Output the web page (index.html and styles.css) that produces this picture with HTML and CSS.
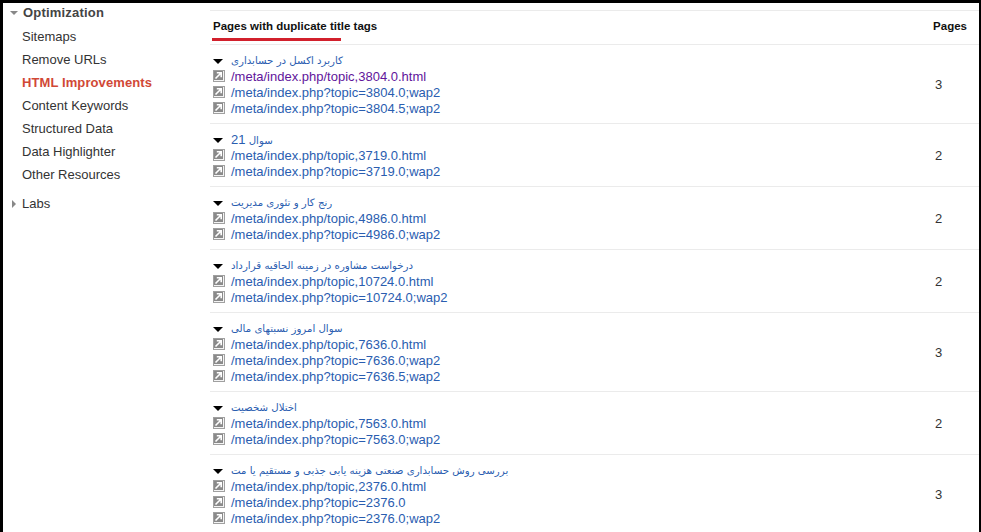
FILE: index.html
```html
<!DOCTYPE html>
<html lang="en">
<head>
    <meta charset="UTF-8">
    <title>HTML Improvements</title>
    <link rel="stylesheet" href="styles.css">
</head>
<body>
    <svg class="defs" width="0" height="0">
        <symbol id="ext" viewBox="0 0 12 12">
            <rect width="12" height="12" fill="#a0a0a0"/>
            <rect x="1" y="1" width="10" height="10" fill="#f4f4f4"/>
            <rect x="1" y="1" width="9" height="9" fill="#8a8a8a"/>
            <path d="M2.5 8.5 L7.5 3.5 M3.8 2.8 H8.2 V7.2" fill="none" stroke="#fff" stroke-width="1.6"/>
        </symbol>
    </svg>
    <div class="page">
        <nav class="sidebar">
            <div class="nav-head"><span class="arrow-down"></span>Optimization</div>
            <ul class="nav-list">
                <li>Sitemaps</li>
                <li>Remove URLs</li>
                <li class="active">HTML Improvements</li>
                <li>Content Keywords</li>
                <li>Structured Data</li>
                <li>Data Highlighter</li>
                <li>Other Resources</li>
            </ul>
            <div class="nav-labs"><span class="arrow-right"></span>Labs</div>
        </nav>
        <main class="content">
            <div class="table-head">
                <div class="head-title">Pages with duplicate title tags</div>
                <div class="head-pages">Pages</div>
            </div>

            <div class="row">
                <div class="links">
                    <div class="title"><span class="toggle"></span><a href="#" dir="rtl">کاربرد اکسل در حسابداری</a></div>
                    <div class="link"><svg class="ext"><use href="#ext"/></svg><a href="#" class="visited">/meta/index.php/topic,3804.0.html</a></div>
                    <div class="link"><svg class="ext"><use href="#ext"/></svg><a href="#">/meta/index.php?topic=3804.0;wap2</a></div>
                    <div class="link"><svg class="ext"><use href="#ext"/></svg><a href="#">/meta/index.php?topic=3804.5;wap2</a></div>
                </div>
                <div class="count">3</div>
            </div>

            <div class="row">
                <div class="links">
                    <div class="title"><span class="toggle"></span><a href="#" dir="rtl">سوال <span class="num">21</span></a></div>
                    <div class="link"><svg class="ext"><use href="#ext"/></svg><a href="#">/meta/index.php/topic,3719.0.html</a></div>
                    <div class="link"><svg class="ext"><use href="#ext"/></svg><a href="#">/meta/index.php?topic=3719.0;wap2</a></div>
                </div>
                <div class="count">2</div>
            </div>

            <div class="row">
                <div class="links">
                    <div class="title"><span class="toggle"></span><a href="#" dir="rtl">رنج کار و تئوری مدیریت</a></div>
                    <div class="link"><svg class="ext"><use href="#ext"/></svg><a href="#">/meta/index.php/topic,4986.0.html</a></div>
                    <div class="link"><svg class="ext"><use href="#ext"/></svg><a href="#">/meta/index.php?topic=4986.0;wap2</a></div>
                </div>
                <div class="count">2</div>
            </div>

            <div class="row">
                <div class="links">
                    <div class="title"><span class="toggle"></span><a href="#" dir="rtl">درخواست مشاوره در زمینه الحاقیه قرارداد</a></div>
                    <div class="link"><svg class="ext"><use href="#ext"/></svg><a href="#">/meta/index.php/topic,10724.0.html</a></div>
                    <div class="link"><svg class="ext"><use href="#ext"/></svg><a href="#">/meta/index.php?topic=10724.0;wap2</a></div>
                </div>
                <div class="count">2</div>
            </div>

            <div class="row">
                <div class="links">
                    <div class="title"><span class="toggle"></span><a href="#" dir="rtl">سوال امروز نسبتهای مالی</a></div>
                    <div class="link"><svg class="ext"><use href="#ext"/></svg><a href="#">/meta/index.php/topic,7636.0.html</a></div>
                    <div class="link"><svg class="ext"><use href="#ext"/></svg><a href="#">/meta/index.php?topic=7636.0;wap2</a></div>
                    <div class="link"><svg class="ext"><use href="#ext"/></svg><a href="#">/meta/index.php?topic=7636.5;wap2</a></div>
                </div>
                <div class="count">3</div>
            </div>

            <div class="row">
                <div class="links">
                    <div class="title"><span class="toggle"></span><a href="#" dir="rtl">اختلال شخصیت</a></div>
                    <div class="link"><svg class="ext"><use href="#ext"/></svg><a href="#">/meta/index.php/topic,7563.0.html</a></div>
                    <div class="link"><svg class="ext"><use href="#ext"/></svg><a href="#">/meta/index.php?topic=7563.0;wap2</a></div>
                </div>
                <div class="count">2</div>
            </div>

            <div class="row">
                <div class="links">
                    <div class="title"><span class="toggle"></span><a href="#" dir="rtl">بررسی روش حسابداری صنعتی هزینه یابی جذبی و مستقیم یا مت</a></div>
                    <div class="link"><svg class="ext"><use href="#ext"/></svg><a href="#">/meta/index.php/topic,2376.0.html</a></div>
                    <div class="link"><svg class="ext"><use href="#ext"/></svg><a href="#">/meta/index.php?topic=2376.0</a></div>
                    <div class="link"><svg class="ext"><use href="#ext"/></svg><a href="#">/meta/index.php?topic=2376.0;wap2</a></div>
                </div>
                <div class="count">3</div>
            </div>
        </main>
    </div>
</body>
</html>
```

FILE: styles.css
```css
html, body {
    margin: 0;
    padding: 0;
    height: 100%;
    overflow: hidden;
}
body {
    font-family: "Liberation Sans", Arial, sans-serif;
    font-size: 13px;
    color: #222;
    background-color: #000;
}
.defs {
    position: absolute;
}
.page {
    display: flex;
    height: 529px;
    margin: 3px 2px 0 3px;
    background-color: #fff;
    overflow: hidden;
}
.sidebar {
    width: 207px;
    flex-shrink: 0;
    font-size: 13px;
    color: #333;
}
.nav-head {
    display: flex;
    align-items: center;
    height: 18px;
    margin-bottom: 4px;
    font-weight: bold;
    letter-spacing: 0.2px;
    color: #444;
}
.arrow-down {
    width: 0;
    height: 0;
    margin: 1px 5px 0 7px;
    border-left: 4px solid transparent;
    border-right: 4px solid transparent;
    border-top: 4px solid #888;
}
.nav-list {
    list-style: none;
    margin: 0;
    padding: 0 0 0 19px;
}
.nav-list li {
    height: 23px;
    line-height: 23px;
}
.nav-list .active {
    font-weight: bold;
    letter-spacing: 0.1px;
    color: #d14836;
}
.nav-labs {
    display: flex;
    align-items: center;
    height: 23px;
    margin-top: 6px;
}
.arrow-right {
    width: 0;
    height: 0;
    margin: 0 6px 0 9px;
    border-top: 4px solid transparent;
    border-bottom: 4px solid transparent;
    border-left: 4px solid #888;
}
.content {
    flex: 1;
    margin-top: 7px;
}
.table-head {
    position: relative;
    display: flex;
    justify-content: space-between;
    height: 33px;
    border-top: 1px solid #ebebeb;
    border-bottom: 1px solid #ebebeb;
    font-size: 11.5px;
    font-weight: bold;
    color: #111;
    line-height: 31px;
}
.head-title {
    margin-left: 3px;
}
.head-title::after {
    content: "";
    position: absolute;
    left: 2px;
    top: 27px;
    width: 129px;
    height: 3px;
    background-color: #d2202c;
}
.head-pages {
    margin-right: 12px;
}
.row {
    display: flex;
    align-items: center;
    justify-content: space-between;
    padding: 8px 0 6px 0;
    border-bottom: 1px solid #ebebeb;
}
.links {
    padding-left: 3px;
}
.title, .link {
    display: flex;
    align-items: center;
    height: 16px;
    line-height: 16px;
}
.title a {
    font-family: "DejaVu Sans", sans-serif;
    font-size: 10.2px;
}
.title .num {
    font-family: "Liberation Sans", Arial, sans-serif;
    font-size: 13px;
}
a {
    color: #2a5db0;
    text-decoration: none;
}
a.visited {
    color: #61149b;
}
.toggle {
    width: 0;
    height: 0;
    margin: 0 8px 0 0;
    border-left: 5px solid transparent;
    border-right: 5px solid transparent;
    border-top: 5px solid #000;
}
.ext {
    width: 12px;
    height: 12px;
    margin: -2px 6px 0 0;
    flex-shrink: 0;
}
.count {
    width: 20px;
    margin: 0 24px 2px 0;
    color: #333;
}
```
